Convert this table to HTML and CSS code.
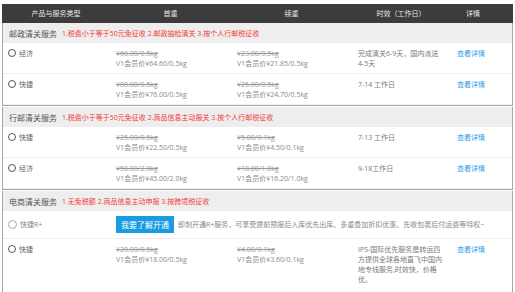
FILE: index.html
```html
<!DOCTYPE html>
<html lang="zh-CN">
<head>
<meta charset="utf-8">
<title>清关服务</title>
<link rel="stylesheet" href="styles.css">
</head>
<body>
<div class="wrap">
  <div class="thead">
    <div class="th">产品与服务类型</div>
    <div class="th">首重</div>
    <div class="th">续重</div>
    <div class="th">时效（工作日）</div>
    <div class="th th-last">详情</div>
  </div>

  <div class="box">
    <div class="sec"><span class="sec-title">邮政清关服务</span><span class="sec-note">1.税费小于等于50元免征收 2.邮政抽检清关 3.按个人行邮税征收</span></div>
    <div class="row">
      <div class="c1"><span class="radio"></span>经济</div>
      <div class="cp"><div class="old">¥68.00/0.5kg</div><div>V1会员价¥64.60/0.5kg</div></div>
      <div class="cp"><div class="old">¥23.00/0.5kg</div><div>V1会员价¥21.85/0.5kg</div></div>
      <div class="ct">完成清关6-9天，国内派送<br>4-5天</div>
      <div class="cl"><a class="link">查看详情</a></div>
    </div>
    <div class="row">
      <div class="c1"><span class="radio"></span>快捷</div>
      <div class="cp"><div class="old">¥80.00/0.5kg</div><div>V1会员价¥76.00/0.5kg</div></div>
      <div class="cp"><div class="old">¥26.00/0.5kg</div><div>V1会员价¥24.70/0.5kg</div></div>
      <div class="ct">7-14 工作日</div>
      <div class="cl"><a class="link">查看详情</a></div>
    </div>
  </div>

  <div class="box">
    <div class="sec"><span class="sec-title">行邮清关服务</span><span class="sec-note">1.税费小于等于50元免征收 2.商品信息主动报关 3.按个人行邮税征收</span></div>
    <div class="row">
      <div class="c1"><span class="radio"></span>快捷</div>
      <div class="cp"><div class="old">¥25.00/0.5kg</div><div>V1会员价¥22.50/0.5kg</div></div>
      <div class="cp"><div class="old">¥5.00/0.1kg</div><div>V1会员价¥4.50/0.1kg</div></div>
      <div class="ct">7-13 工作日</div>
      <div class="cl"><a class="link">查看详情</a></div>
    </div>
    <div class="row">
      <div class="c1"><span class="radio"></span>经济</div>
      <div class="cp"><div class="old">¥50.00/2.0kg</div><div>V1会员价¥45.00/2.0kg</div></div>
      <div class="cp"><div class="old">¥18.00/1.0kg</div><div>V1会员价¥16.20/1.0kg</div></div>
      <div class="ct">9-18工作日</div>
      <div class="cl"><a class="link">查看详情</a></div>
    </div>
  </div>

  <div class="box box-open">
    <div class="sec"><span class="sec-title">电商清关服务</span><span class="sec-note">1.无免税额 2.商品信息主动申报 3.按跨境税征收</span></div>
    <div class="row row-plus">
      <div class="c1 dim"><span class="radio radio-off"></span>快捷R+</div>
      <div class="plus"><span class="btn">我要了解开通</span><span class="plus-text">即刻开通R+服务，可享受提前预报后入库优先出库、多重叠加折扣优惠、先收包裹后付运费等特权~</span></div>
    </div>
    <div class="row">
      <div class="c1"><span class="radio"></span>快捷</div>
      <div class="cp"><div class="old">¥20.00/0.5kg</div><div>V1会员价¥18.00/0.5kg</div></div>
      <div class="cp"><div class="old">¥4.00/0.1kg</div><div>V1会员价¥3.60/0.1kg</div></div>
      <div class="ct ct-long">IPS-国际优先服务是转运四<br>方提供全球各地直飞中国内<br>地专线服务,时效快，价格<br>优。</div>
      <div class="cl"><a class="link">查看详情</a></div>
    </div>
    <div class="row">
      <div class="c1"><span class="radio"></span>经济</div>
      <div class="cp"><div class="old">¥30.00/0.5kg</div><div>V1会员价¥27.00/0.5kg</div></div>
      <div class="cp"><div class="old">¥6.00/0.1kg</div><div>V1会员价¥5.40/0.1kg</div></div>
      <div class="ct">10-20 工作日</div>
      <div class="cl"><a class="link">查看详情</a></div>
    </div>
  </div>
</div>
</body>
</html>
```
FILE: styles.css
```css
html, body {
  margin: 0;
  padding: 0;
  background: #fff;
}
body {
  font-family: "Open Sans", "Noto Sans CJK SC", sans-serif;
  font-size: 7px;
  color: #777;
  overflow: hidden;
}
.wrap {
  margin: 4px 0 0 2px;
  width: 511px;
}
.thead {
  display: grid;
  grid-template-columns: 108px 121px 121px 98px 1fr;
  height: 19px;
  background: #3c3c3c;
  color: #e8e8e8;
  align-items: center;
}
.th {
  text-align: center;
  line-height: 19px;
}
.th-last {
  text-align: left;
  padding-left: 16px;
}
.box {
  border: 1px solid #a6a6a6;
  border-top: none;
  margin-bottom: 1px;
}
.box-open {
  border-bottom: none;
}
.sec {
  height: 20px;
  background: #eeeeee;
  display: flex;
  align-items: center;
  padding-left: 6px;
  gap: 5px;
}
.sec-title {
  font-size: 8px;
  color: #555;
}
.sec-note {
  color: #f23a3a;
}
.row {
  display: grid;
  grid-template-columns: 107px 121px 121px 98px 1fr;
  padding: 6px 0 4px;
  border-bottom: 1px solid #efefef;
  line-height: 10px;
  background: #fff;
}
.c1 {
  display: flex;
  align-items: flex-start;
  padding-left: 5px;
  color: #666;
}
.radio {
  width: 6px;
  height: 6px;
  border: 1.5px solid #555;
  border-radius: 50%;
  margin: 0 3px 0 0;
  flex: none;
}
.radio-off {
  border: 1px solid #aaa;
  width: 7px;
  height: 7px;
}
.dim {
  color: #888;
  align-items: center;
}
.cp {
  padding-left: 6px;
  color: #8a8a8a;
}
.old {
  text-decoration: line-through;
  color: #999;
}
.ct {
  padding-left: 6px;
  color: #7a7a7a;
}
.ct-long {
  padding-bottom: 4px;
}
.cl {
  padding-left: 7px;
}
.link {
  color: #2b9de4;
  text-decoration: none;
}
.row-plus {
  padding: 5px 0 5px;
  align-items: center;
}
.plus {
  grid-column: 2 / 6;
  display: flex;
  align-items: center;
  padding-left: 6px;
  gap: 4px;
}
.btn {
  display: inline-block;
  background: #1a9be3;
  color: #fff;
  font-size: 8px;
  height: 17px;
  line-height: 17px;
  padding: 0 5px;
}
.plus-text {
  color: #888;
  white-space: nowrap;
}
```
